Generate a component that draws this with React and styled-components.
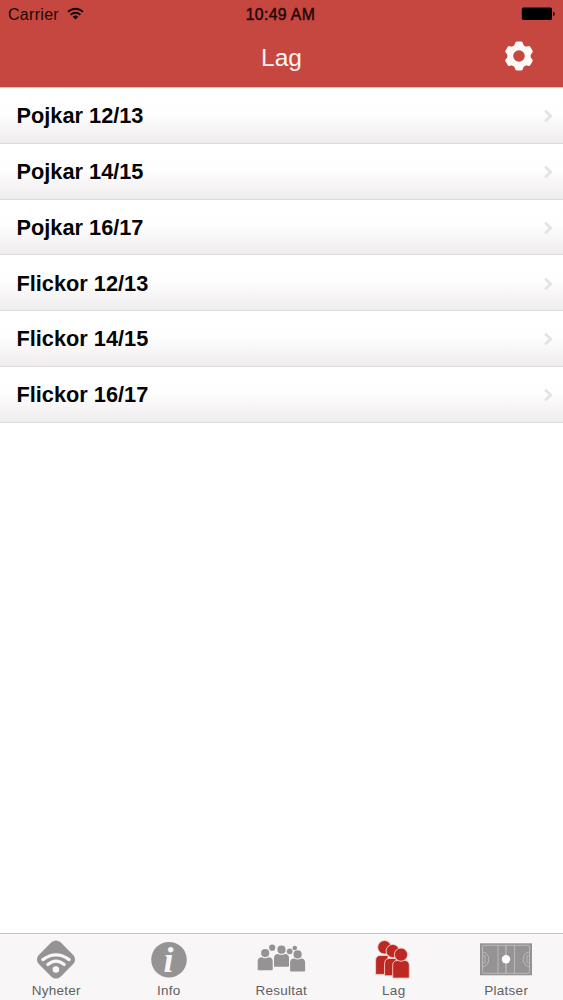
import styled, { createGlobalStyle } from "styled-components";

const GlobalStyle = createGlobalStyle`
    * {
        box-sizing: border-box;
    }
    body {
        margin: 0;
        background: #fff;
        font-family: "Liberation Sans", Arial, sans-serif;
    }
`;

const Screen = styled.div`
    display: flex;
    flex-direction: column;
    width: 563px;
    height: 1000px;
    background: #fff;
    overflow: hidden;
`;

const Header = styled.header`
    height: 88px;
    background: #c64740;
    border-bottom: 1px solid #e5c5c2;
    flex-shrink: 0;
`;

const StatusBar = styled.div`
    display: grid;
    grid-template-columns: 1fr auto 1fr;
    align-items: center;
    height: 28px;
    padding: 0 8px;
    color: #1c0605;
    font-size: 16px;
    line-height: 28px;
`;

const Carrier = styled.div`
    display: flex;
    align-items: center;
    gap: 8px;
    padding-top: 1px;
    letter-spacing: 0.3px;
    svg {
        margin-top: -3px;
    }
`;

const Clock = styled.div`
    padding: 1px 2px 0 0;
    font-size: 15.8px;
    letter-spacing: 0.35px;
    -webkit-text-stroke: 0.4px #1c0605;
`;

const Battery = styled.svg`
    justify-self: end;
    margin-top: -1px;
`;

const NavBar = styled.div`
    display: grid;
    grid-template-columns: 1fr auto 1fr;
    align-items: center;
    height: 59px;
    padding: 0 29px;
`;

const Title = styled.h1`
    grid-column: 2;
    margin: 0;
    color: #fff4f1;
    font-size: 24.5px;
    font-weight: normal;
    line-height: 58px;
`;

const SettingsButton = styled.button`
    justify-self: end;
    width: 30px;
    height: 30px;
    margin-top: -4px;
    padding: 0;
    border: 0;
    background: none;
    svg {
        display: block;
    }
`;

const TeamList = styled.ul`
    flex: 1;
    margin: 0;
    padding: 0;
    list-style: none;
`;

const TeamRow = styled.li`
    display: flex;
    align-items: center;
    justify-content: space-between;
    height: 55.75px;
    padding: 2px 10px 0 16.5px;
    border-bottom: 1px solid #dcdadb;
    background: linear-gradient(#fff 0%, #fefefe 48%, #f7f5f6 72%, #efedee 100%);
    color: #050505;
    font-size: 21.75px;
    font-weight: bold;
`;

const TabBar = styled.nav`
    display: grid;
    grid-template-columns: repeat(5, 112.5px);
    height: 67px;
    border-top: 1px solid #c4c2c3;
    background: #f8f6f7;
    flex-shrink: 0;
`;

const Tab = styled.a`
    display: flex;
    flex-direction: column;
    align-items: center;
    color: #626061;
    font-size: 13.5px;
    letter-spacing: 0.25px;
    line-height: 16px;
    svg {
        display: block;
        margin: 5px 0 3px;
    }
`;

const grey = "#959394";
const red = "#bd2922";
const pale = "#f8f6f7";

const WifiIcon = () => (
    <svg width="17" height="13" viewBox="0 0 17 13" fill="none" stroke="#1c0605" strokeWidth="1.9">
        <path d="M1 4.9C5.2 .6 11.8 .6 16 4.9" />
        <path d="M3.6 7.9C6.4 5 10.6 5 13.4 7.9" />
        <path d="M5.6 9.7Q8.5 7.3 11.4 9.7L8.5 12.6Z" fill="#1c0605" stroke="none" />
    </svg>
);

const BatteryIcon = () => (
    <Battery width="34" height="14" viewBox="0 0 34 14">
        <rect x="0.8" y="0.5" width="30.2" height="12.5" rx="1.5" fill="#000" />
        <path d="M32 4.7q1.8.4 1.8 2.1t-1.8 2.1z" fill="#000" />
    </Battery>
);

const GearIcon = () => (
    <svg width="30" height="30" viewBox="-15 -15 30 30">
        <circle r="8.7" fill="none" stroke="#fffaf7" strokeWidth="5.8" />
        {[0, 60, 120, 180, 240, 300].map((angle) => (
            <path
                key={angle}
                d="M-6.2-9Q-4.4-10.2-4-12.5Q-3.7-14.4-2.2-14.4H2.2Q3.7-14.4 4-12.5Q4.4-10.2 6.2-9Z"
                fill="#fffaf7"
                transform={`rotate(${angle})`}
            />
        ))}
    </svg>
);

const Chevron = () => (
    <svg width="9" height="14" viewBox="0 0 9 14" fill="none" stroke="#e4e2e3" strokeWidth="2.8">
        <path d="M1.2 1.7L6.7 7L1.2 12.3" />
    </svg>
);

const NewsIcon = () => (
    <svg width="40" height="41" viewBox="0 0 40 41">
        <rect x="4.6" y="5.1" width="30.8" height="30.8" rx="6.5" fill={grey} transform="rotate(45 20 20.5)" />
        <g fill="none" stroke={pale} strokeWidth="3.2" strokeLinecap="round">
            <path d="M6.8 20.6Q20 11 33.2 20.6" />
            <path d="M11.8 25.6Q20 18.8 28.2 25.6" />
        </g>
        <circle cx="19.9" cy="30.5" r="3.3" fill={pale} />
    </svg>
);

const InfoIcon = () => (
    <svg width="40" height="41" viewBox="0 0 40 41">
        <circle cx="20" cy="20.7" r="17.8" fill={grey} />
        <text
            x="19.6"
            y="32.5"
            textAnchor="middle"
            fill={pale}
            fontFamily="Liberation Serif, serif"
            fontStyle="italic"
            fontWeight="bold"
            fontSize="36"
        >
            i
        </text>
    </svg>
);

const Person = ({ x, y }) => (
    <g transform={`translate(${x} ${y})`}>
        <circle cy="3.9" r="4.1" />
        <path d="M-7.5 20.3V12Q-7.5 8.4-3.6 8.1Q0 10 3.6 8.1Q7.5 8.4 7.5 12V20.3Q7.5 21 6.8 21H-6.8Q-7.5 21-7.5 20.3Z" />
    </g>
);

const ResultsIcon = () => (
    <svg width="50" height="41" viewBox="0 0 50 41" fill={grey}>
        <circle cx="16.2" cy="8.7" r="3.1" />
        <circle cx="33.7" cy="12.3" r="2.9" />
        <circle cx="38.8" cy="9" r="2.3" />
        <Person x={9.2} y={10.2} />
        <Person x={25.5} y={6.8} />
        <Person x={41.6} y={11.5} />
    </svg>
);

const TeamIcon = () => (
    <svg width="40" height="41" viewBox="0 0 40 41" fill={red} stroke="#f3d5cf" strokeWidth="0.9">
        <path d="M1.6 35.4V21.5Q1.6 16.5 6.5 16.5H14V35.4Z" />
        <circle cx="10.5" cy="8.3" r="6.8" />
        <path d="M10.6 36.8V24.7Q10.6 19.5 15.5 19.5H22V36.8Z" />
        <circle cx="18.7" cy="12" r="6.6" />
        <path d="M18.7 39.1V26.6Q18.7 21.5 23.4 21.5H30.6Q35.3 21.5 35.3 26.6V39.1Z" />
        <circle cx="27" cy="15.6" r="6.6" />
    </svg>
);

const PitchIcon = () => (
    <svg width="52" height="41" viewBox="0 0 52 41">
        <rect x="0" y="4.3" width="52" height="32" fill={grey} />
        <g fill="none" stroke="#c4c2c3" strokeWidth="0.8">
            <rect x="2.5" y="6.3" width="47" height="28" rx="1.5" />
            <path d="M18 6.3V34.3M34.5 6.3V34.3" />
            <path d="M26 6.3V34.3" strokeWidth="1.1" />
            <path d="M2.5 13Q8.7 14 8.7 20.3T2.5 27.8" />
            <path d="M49.5 13Q43.3 14 43.3 20.3T49.5 27.8" />
            <path d="M2.5 16.8H5V23.8H2.5M49.5 16.8H47V23.8H49.5" />
        </g>
        <circle cx="26" cy="20.3" r="4.2" fill="#fff" />
    </svg>
);

const teams = [
    "Pojkar 12/13",
    "Pojkar 14/15",
    "Pojkar 16/17",
    "Flickor 12/13",
    "Flickor 14/15",
    "Flickor 16/17",
];

const tabs = [
    { label: "Nyheter", Icon: NewsIcon },
    { label: "Info", Icon: InfoIcon },
    { label: "Resultat", Icon: ResultsIcon },
    { label: "Lag", Icon: TeamIcon },
    { label: "Platser", Icon: PitchIcon },
];

const App = () => {
    return (
        <Screen>
            <GlobalStyle />
            <Header>
                <StatusBar>
                    <Carrier>
                        Carrier
                        <WifiIcon />
                    </Carrier>
                    <Clock>10:49 AM</Clock>
                    <BatteryIcon />
                </StatusBar>
                <NavBar>
                    <Title>Lag</Title>
                    <SettingsButton>
                        <GearIcon />
                    </SettingsButton>
                </NavBar>
            </Header>
            <TeamList>
                {teams.map((team) => (
                    <TeamRow key={team}>
                        {team}
                        <Chevron />
                    </TeamRow>
                ))}
            </TeamList>
            <TabBar>
                {tabs.map(({ label, Icon }) => (
                    <Tab key={label}>
                        <Icon />
                        {label}
                    </Tab>
                ))}
            </TabBar>
        </Screen>
    );
};

export default App;
